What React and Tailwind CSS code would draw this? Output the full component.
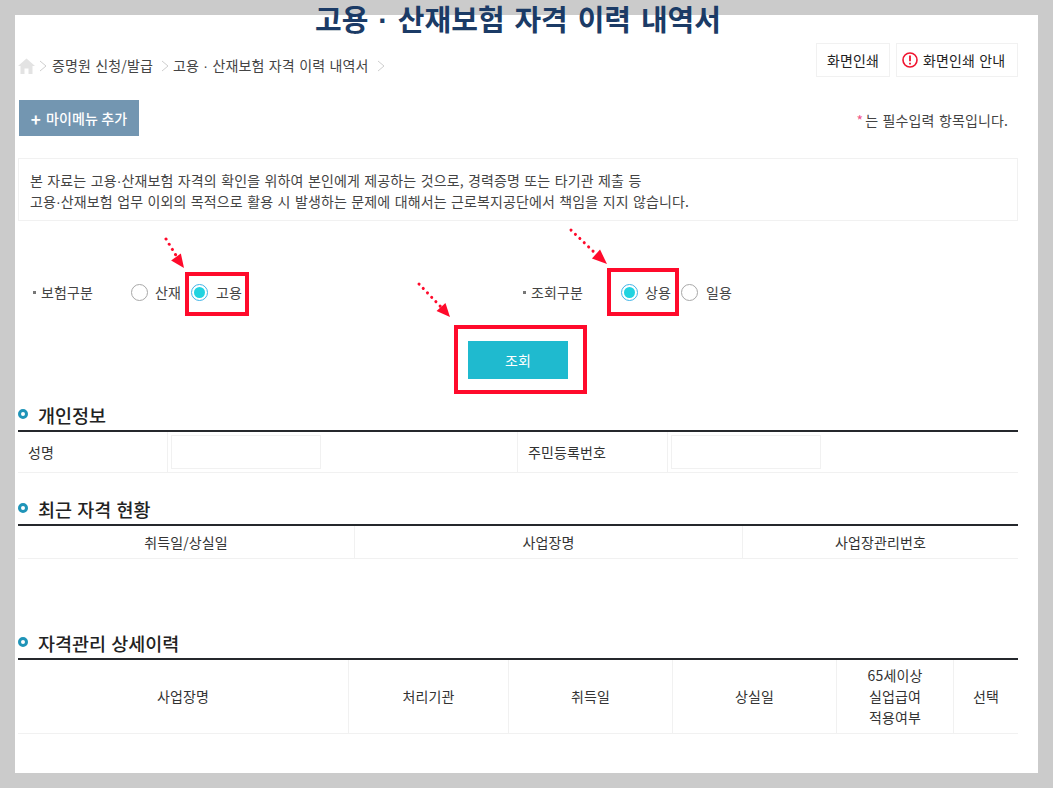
const font = { fontFamily: '"Noto Sans CJK KR", "Noto Sans", sans-serif' };

function Dot() {
  return <span className="font-['Liberation_Sans']">·</span>;
}

function Heading({ children, className }) {
  return (
    <div className={"flex h-[30px] items-start " + className}>
      <span className="mt-[9px] h-[10px] w-[10px] rounded-full border-[3px] border-[#1f94b8]" />
      <span className="ml-[10px] mt-[2px] text-[18.5px] font-medium leading-[26px] tracking-normal text-[#222] [word-spacing:1px]">{children}</span>
    </div>
  );
}

function Radio({ on }) {
  return on ? (
    <span className="flex h-[17px] w-[17px] items-center justify-center rounded-full border border-[#3fb4e8]">
      <span className="h-[11px] w-[11px] rounded-full bg-[#22d3e0]" />
    </span>
  ) : (
    <span className="h-[17px] w-[17px] rounded-full border border-[#a8a8a8]" />
  );
}

function Bullet() {
  return <span className="mr-[5px] h-[3px] w-[3px] bg-[#777]" />;
}

function Arrow({ x1, y1, x2, y2, tip, base }) {
  const a = Math.atan2(tip[1] - base[1], tip[0] - base[0]);
  const nx = -Math.sin(a) * 6;
  const ny = Math.cos(a) * 6;
  return (
    <g>
      <line x1={x1} y1={y1} x2={x2} y2={y2} stroke="#ff0a2b" strokeWidth="3" strokeLinecap="round" strokeDasharray="0.1 6" />
      <polygon points={`${tip[0]},${tip[1]} ${base[0] + nx},${base[1] + ny} ${base[0] - nx},${base[1] - ny}`} fill="#ff0a2b" />
    </g>
  );
}

export default function App() {
  return (
    <div style={font} className="relative h-[788px] w-[1053px] overflow-hidden bg-[#cbcbcb] p-[15px] text-[14px] tracking-[0.12px] text-[#333] [word-spacing:1.1px]">
      <div className="flow-root h-[758px] bg-white pl-[3px] pr-[20px]">
        <h1 className="-mt-[15px] h-[36px] text-center text-[29px] font-bold leading-[36px] tracking-normal text-[#1b3b66] [word-spacing:3.3px]">고용 <Dot /> 산재보험 자격 이력 내역서</h1>

        <div className="mt-[7px] flex h-[34px] justify-between">
          <div className="flex items-center pt-[11px] text-[#444]">
            <svg width="17" height="16" viewBox="0 0 17 16">
              <path d="M8.5 0.5 L17 8 H14.5 V16 H10.5 V10.5 H6.5 V16 H2.5 V8 H0 Z" fill="#e3e3e3" />
            </svg>
            <svg width="8" height="12" viewBox="0 0 8 12" className="mx-[4px]"><path d="M1 1 L7 6 L1 11" fill="none" stroke="#cfcfcf" /></svg>
            <span className="ml-[1px]">증명원 신청/발급</span>
            <svg width="8" height="12" viewBox="0 0 8 12" className="ml-[8px] mr-[4px]"><path d="M1 1 L7 6 L1 11" fill="none" stroke="#cfcfcf" /></svg>
            <span>고용 <Dot /> 산재보험 자격 이력 내역서</span>
            <svg width="8" height="12" viewBox="0 0 8 12" className="ml-[8px]"><path d="M1 1 L7 6 L1 11" fill="none" stroke="#cfcfcf" /></svg>
          </div>
          <div className="flex gap-[6px] text-[#222]">
            <div className="flex w-[74px] items-center justify-center border border-[#f1f1f1]">화면인쇄</div>
            <div className="flex w-[122px] items-center gap-[5px] border border-[#f1f1f1] pl-[5px]">
              <svg width="16" height="16" viewBox="0 0 16 16">
                <circle cx="8" cy="8" r="7" fill="none" stroke="#f0142f" strokeWidth="1.6" />
                <path d="M8 3.6 V9.2 M8 10.8 V12.4" stroke="#f0142f" strokeWidth="1.8" />
              </svg>
              화면인쇄 안내
            </div>
          </div>
        </div>

        <div className="mt-[23px] flex h-[36px] items-center justify-between">
          <button className="ml-[1px] flex h-[36px] w-[120px] items-center justify-center gap-[5px] bg-[#7396b1] font-medium text-white">
            <span className="text-[17px] font-bold leading-none">+</span>마이메뉴 추가
          </button>
          <div className="mr-[10px] pt-[4px] text-[#444]"><span className="mr-[2px] text-[#f0568a]">*</span>는 필수입력 항목입니다.</div>
        </div>

        <div className="mt-[22px] h-[63px] border border-[#f1f1f1] px-[11px] py-[11px] leading-[20px] text-[#444]">
          <p>본 자료는 고용<Dot />산재보험 자격의 확인을 위하여 본인에게 제공하는 것으로, 경력증명 또는 타기관 제출 등</p>
          <p>고용<Dot />산재보험 업무 이외의 목적으로 활용 시 발생하는 문제에 대해서는 근로복지공단에서 책임을 지지 않습니다.</p>
        </div>

        <div className="mt-[51px] flex h-[40px] items-center text-[#444]">
          <div className="ml-[15px] flex w-[98px] items-center"><Bullet />보험구분</div>
          <Radio />
          <span className="ml-[7px] w-[36px]">산재</span>
          <Radio on />
          <span className="ml-[8px] w-[30px]">고용</span>
          <div className="ml-[277px] flex w-[98px] items-center"><Bullet />조회구분</div>
          <Radio on />
          <span className="ml-[7px] w-[36px]">상용</span>
          <Radio />
          <span className="ml-[8px]">일용</span>
        </div>

        <div className="mt-[29px] flex justify-center">
          <button className="h-[38px] w-[100px] bg-[#1fbacf] text-white">조회</button>
        </div>

        <Heading className="mt-[21px]">개인정보</Heading>
        <div className="grid h-[43px] grid-cols-[150px_350px_150px_1fr] border-t-2 border-b border-[#f1f1f1] border-t-[#25282c]">
          <div className="flex items-center border-r border-[#f1f1f1] pl-[10px]">성명</div>
          <div className="border-r border-[#f1f1f1] pl-[3px] pt-[3px]"><div className="h-[34px] w-[150px] border border-[#f1f1f1]" /></div>
          <div className="flex items-center border-r border-[#f1f1f1] pl-[10px]">주민등록번호</div>
          <div className="pl-[3px] pt-[3px]"><div className="h-[34px] w-[150px] border border-[#f1f1f1]" /></div>
        </div>

        <Heading className="mt-[21px]">최근 자격 현황</Heading>
        <div className="grid h-[35px] grid-cols-[337px_388px_1fr] border-t-2 border-b border-[#f1f1f1] border-t-[#25282c]">
          <div className="flex items-center justify-center border-r border-[#f1f1f1]">취득일/상실일</div>
          <div className="flex items-center justify-center border-r border-[#f1f1f1]">사업장명</div>
          <div className="flex items-center justify-center">사업장관리번호</div>
        </div>

        <Heading className="mt-[69px]">자격관리 상세이력</Heading>
        <div className="grid h-[76px] grid-cols-[331px_160px_164px_164px_117px_1fr] border-t-2 border-b border-[#f1f1f1] border-t-[#25282c]">
          <div className="flex items-center justify-center border-r border-[#f1f1f1]">사업장명</div>
          <div className="flex items-center justify-center border-r border-[#f1f1f1]">처리기관</div>
          <div className="flex items-center justify-center border-r border-[#f1f1f1]">취득일</div>
          <div className="flex items-center justify-center border-r border-[#f1f1f1]">상실일</div>
          <div className="flex items-center justify-center border-r border-[#f1f1f1] text-center leading-[21px]">65세이상<br />실업급여<br />적용여부</div>
          <div className="flex items-center justify-center">선택</div>
        </div>
      </div>

      <div className="absolute left-[185px] top-[272px] h-[44px] w-[64px] border-[4px] border-[#ff0a2b]" />
      <div className="absolute left-[607px] top-[268px] h-[48px] w-[72px] border-[4px] border-[#ff0a2b]" />
      <div className="absolute left-[454px] top-[325px] h-[69px] w-[133px] border-[4px] border-[#ff0a2b]" />
      <svg className="pointer-events-none absolute left-0 top-0" width="1053" height="788">
        <Arrow x1={166} y1={239} x2={177} y2={257} base={[176, 257]} tip={[184, 268]} />
        <Arrow x1={571} y1={230} x2={596} y2={254} base={[596, 254]} tip={[607, 264]} />
        <Arrow x1={419} y1={284} x2={441} y2={307} base={[441, 307]} tip={[450, 317]} />
      </svg>
    </div>
  );
}
